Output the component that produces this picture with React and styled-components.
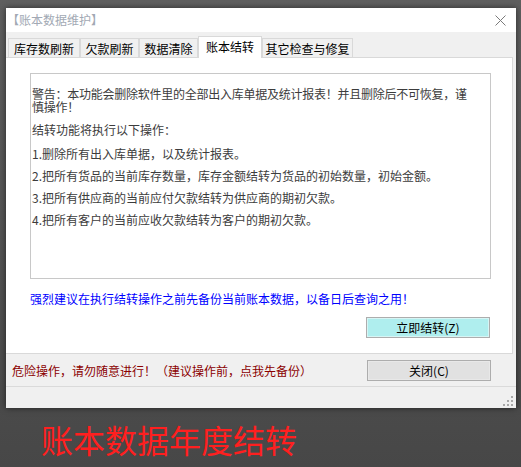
import React from 'react';
import styled, { createGlobalStyle } from 'styled-components';

const GlobalStyle = createGlobalStyle`
  html, body {
    margin: 0;
    padding: 0;
  }
  body {
    width: 521px;
    height: 467px;
    overflow: hidden;
    background: linear-gradient(#5f5f5f, #474747);
    font-family: "Noto Sans CJK SC", "Noto Sans", sans-serif;
    font-size: 12px;
  }
`;

const Page = styled.div`
  display: flex;
  flex-direction: column;
  padding: 8px 0 0 6px;
`;

const Dialog = styled.div`
  width: 510px;
  height: 400px;
  display: flex;
  flex-direction: column;
  background: #f0f0f0;
  box-shadow: 0 0 6px rgba(0, 0, 0, 0.55);
`;

const TitleBar = styled.div`
  height: 24px;
  flex: none;
  display: flex;
  align-items: center;
  justify-content: space-between;
  background: #fff;
  padding: 0 10px 0 1px;
`;

const Title = styled.span`
  color: #a2a9b4;
  font-size: 12px;
  line-height: 14px;
`;

const TabStrip = styled.div`
  height: 25px;
  flex: none;
  display: flex;
  align-items: flex-end;
  padding-left: 2px;
`;

const Tab = styled.div`
  position: relative;
  z-index: ${(p) => (p.$active ? 2 : 1)};
  box-sizing: border-box;
  width: ${(p) => p.$width}px;
  height: ${(p) => (p.$active ? 22 : 19)}px;
  margin-bottom: ${(p) => (p.$active ? -1 : 0)}px;
  padding-bottom: ${(p) => (p.$active ? 2 : 0)}px;
  display: flex;
  align-items: center;
  justify-content: center;
  background: ${(p) => (p.$active ? '#fff' : '#f0f0f0')};
  border: 1px solid #d9d9d9;
  border-bottom: none;
  color: #000;
  font-size: 12px;
  white-space: nowrap;
`;

const TabPage = styled.div`
  box-sizing: border-box;
  height: 297px;
  flex: none;
  margin-right: 3px;
  background: #fff;
  border-top: 1px solid #d9d9d9;
  border-right: 1px solid #d9d9d9;
  border-bottom: 1px solid #d9d9d9;
  display: flex;
  flex-direction: column;
  padding: 15px 22px 0 24px;
`;

const InfoBox = styled.div`
  box-sizing: border-box;
  width: 461px;
  height: 206px;
  border: 1px solid #c8c8c8;
  padding: 13px 0 0 1px;
  color: #3c3c3c;
  font-size: 12px;
`;

const Warning = styled.div`
  display: flex;
  flex-direction: column;
  line-height: 13px;
  white-space: nowrap;
`;

const WarningLine = styled.span`
  display: block;
  letter-spacing: -0.25px;
`;

const Para = styled.div`
  line-height: 22px;
  margin-top: ${(p) => p.$gap || 0}px;
  white-space: nowrap;
`;

const Advice = styled.div`
  margin-top: 12px;
  line-height: 16px;
  color: #0000ff;
  font-size: 12px;
  white-space: nowrap;
`;

const ActionRow = styled.div`
  display: flex;
  justify-content: flex-end;
  margin-top: 10px;
`;

const Button = styled.button`
  box-sizing: border-box;
  width: 124px;
  height: 21px;
  padding: 0;
  font-family: inherit;
  font-size: 12px;
  line-height: 1;
  color: #000;
  background: ${(p) => (p.$accent ? '#afeeee' : '#e1e1e1')};
  border: 1px solid #adadad;
  box-shadow: inset 0 0 0 1px ${(p) => (p.$accent ? '#d6f5f5' : '#e8e8e8')};
`;

const Footer = styled.div`
  box-sizing: border-box;
  height: 33px;
  flex: none;
  display: flex;
  align-items: center;
  justify-content: space-between;
  padding: 1px 25px 0 6px;
  border-bottom: 1px solid #dadada;
`;

const Danger = styled.span`
  color: #8b0000;
  font-size: 12px;
  white-space: nowrap;
`;

const StatusBar = styled.div`
  flex: 1;
  display: flex;
  align-items: flex-end;
  justify-content: flex-end;
  padding: 0 3px 2px 0;
`;

const Caption = styled.div`
  margin-top: 15px;
  padding-left: 35px;
  font-size: 32px;
  line-height: 32px;
  color: #ff1f1f;
  white-space: nowrap;
`;

function CloseIcon() {
  return (
    <svg width="11" height="11" viewBox="0 0 11 11">
      <path d="M0.5 0.5 L10.5 10.5 M10.5 0.5 L0.5 10.5" stroke="#7a7a7a" strokeWidth="1" fill="none" />
    </svg>
  );
}

function Grip() {
  const dots = [
    [8, 0],
    [4, 4], [8, 4],
    [0, 8], [4, 8], [8, 8],
  ];
  return (
    <svg width="10" height="10" viewBox="0 0 10 10">
      {dots.map(([x, y]) => (
        <rect key={`${x}-${y}`} x={x} y={y} width="2" height="2" fill="#a8a8a8" />
      ))}
    </svg>
  );
}

const tabs = [
  { label: '库存数刷新', width: 72 },
  { label: '欠款刷新', width: 59 },
  { label: '数据清除', width: 59 },
  { label: '账本结转', width: 64, active: true },
  { label: '其它检查与修复', width: 91 },
];

const steps = [
  '1.删除所有出入库单据，以及统计报表。',
  '2.把所有货品的当前库存数量，库存金额结转为货品的初始数量，初始金额。',
  '3.把所有供应商的当前应付欠款结转为供应商的期初欠款。',
  '4.把所有客户的当前应收欠款结转为客户的期初欠款。',
];

export default function App() {
  return (
    <>
      <GlobalStyle />
      <Page>
        <Dialog>
          <TitleBar>
            <Title>【账本数据维护】</Title>
            <CloseIcon />
          </TitleBar>
          <TabStrip>
            {tabs.map((t) => (
              <Tab key={t.label} $width={t.width} $active={t.active}>
                {t.label}
              </Tab>
            ))}
          </TabStrip>
          <TabPage>
            <InfoBox>
              <Warning>
                <WarningLine>警告：本功能会删除软件里的全部出入库单据及统计报表！并且删除后不可恢复，谨</WarningLine>
                <WarningLine>慎操作！</WarningLine>
              </Warning>
              <Para $gap={6}>结转功能将执行以下操作：</Para>
              {steps.map((s, i) => (
                <Para key={s} $gap={i === 0 ? 2 : 0}>{s}</Para>
              ))}
            </InfoBox>
            <Advice>强烈建议在执行结转操作之前先备份当前账本数据，以备日后查询之用！</Advice>
            <ActionRow>
              <Button $accent>立即结转(Z)</Button>
            </ActionRow>
          </TabPage>
          <Footer>
            <Danger>危险操作，请勿随意进行！（建议操作前，点我先备份）</Danger>
            <Button>关闭(C)</Button>
          </Footer>
          <StatusBar>
            <Grip />
          </StatusBar>
        </Dialog>
        <Caption>账本数据年度结转</Caption>
      </Page>
    </>
  );
}
